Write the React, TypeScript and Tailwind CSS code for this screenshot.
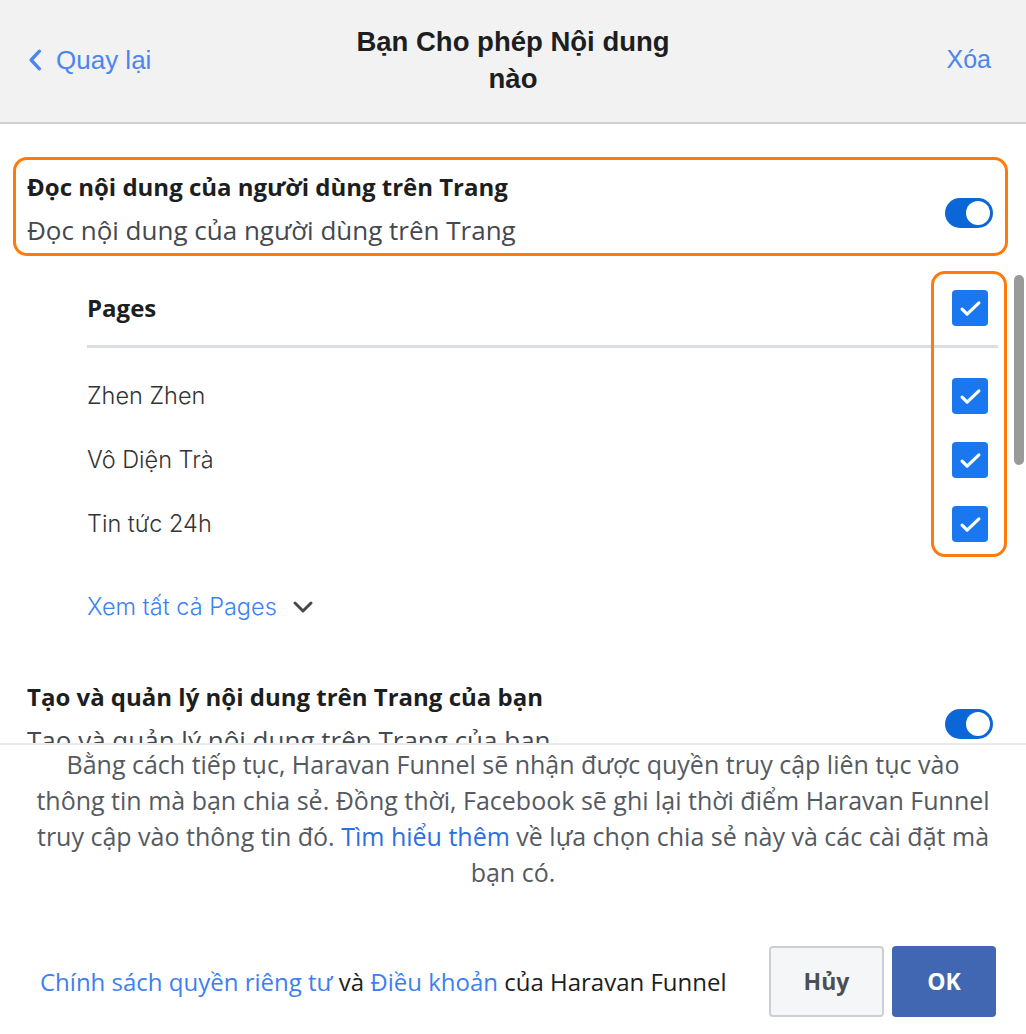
import React from "react";

const pages = ["Zhen Zhen", "Vô Diện Trà", "Tin tức 24h"];

const Toggle = () => (
    <div className="w-[48px] h-[30px] rounded-full bg-[#0b67d8] flex items-center justify-end pr-[3px]">
        <div className="w-[24px] h-[24px] rounded-full bg-white" />
    </div>
);

const Check = () => (
    <div className="w-[36px] h-[36px] rounded-[4px] bg-[#1b77f0] flex items-center justify-center">
        <svg viewBox="0 0 24 24" className="w-[27px] h-[27px]" fill="none" stroke="white" strokeWidth={2.8} strokeLinecap="round" strokeLinejoin="round">
            <path d="M4.5 12.5l4.5 4.5 10.5-10" />
        </svg>
    </div>
);

export default function App() {
    return (
        <div className="h-[1034px] w-full flex flex-col bg-white font-['Liberation_Sans',Arial,sans-serif] text-[#1c1e21]">
            {/* Header */}
            <div className="h-[124px] shrink-0 bg-[#f2f2f2] border-b-2 border-[#cfcfcf] flex items-center px-[28px]">
                <div className="w-[200px] flex items-center gap-[14px] text-[#4a86ee] text-[26px] -mt-[2px]">
                    <svg viewBox="0 0 12 20" className="w-[14px] h-[22px]" fill="none" stroke="currentColor" strokeWidth={3} strokeLinecap="round" strokeLinejoin="round">
                        <path d="M10 2L2.5 10 10 18" />
                    </svg>
                    <span>Quay lại</span>
                </div>
                <div className="flex-1 text-center font-bold text-[27.5px] leading-[37px] -mt-[2px]">
                    Bạn Cho phép Nội dung
                    <br />
                    nào
                </div>
                <div className="w-[200px] text-right text-[#4a86ee] text-[25px] pr-[7px] -mt-[2px]">Xóa</div>
            </div>

            {/* Scrollable content */}
            <div className="relative flex-1 overflow-hidden font-['Open_Sans',sans-serif]">
                {/* Section 1 */}
                <div className="ml-[13px] mr-[18px] mt-[33px] h-[99px] border-[3px] border-[#ff7a0c] rounded-[14px] flex items-center pl-[11px] pr-[12px]">
                    <div className="flex-1 mt-[4px]">
                        <div className="font-bold text-[24px] leading-[30px]">Đọc nội dung của người dùng trên Trang</div>
                        <div className="text-[26px] leading-[30px] mt-[13px] text-[#444950]">Đọc nội dung của người dùng trên Trang</div>
                    </div>
                    <div className="mt-[12px]">
                        <Toggle />
                    </div>
                </div>

                {/* Pages list */}
                <div className="relative pl-[87px] pr-[28px] mt-[15px]">
                    <div className="h-[74px] flex items-center justify-between pr-[10px]">
                        <span className="font-bold text-[24px]">Pages</span>
                        <Check />
                    </div>
                    <div className="h-[3px] bg-[#dadde1]" />
                    <div className="pt-[16px]">
                        {pages.map((p) => (
                            <div key={p} className="h-[64px] flex items-center justify-between pr-[10px]">
                                <span className="font-['Inter',sans-serif] font-light text-[23.5px] text-[#333]">{p}</span>
                                <Check />
                            </div>
                        ))}
                    </div>
                    {/* highlight around checkboxes */}
                    <div className="absolute top-0 right-[19px] w-[76px] h-[286px] border-[3px] border-[#ff7a0c] rounded-[14px]" />
                </div>

                <div className="pl-[87px] mt-[31px] h-[40px] flex items-center gap-[14px]">
                    <span className="font-['Inter',sans-serif] font-light text-[23.5px] text-[#3d82f2]">Xem tất cả Pages</span>
                    <svg viewBox="0 0 24 24" className="w-[24px] h-[24px]" fill="none" stroke="#444950" strokeWidth={3} strokeLinecap="round" strokeLinejoin="round">
                        <path d="M4 8l8 8 8-8" />
                    </svg>
                </div>

                {/* Section 2 */}
                <div className="mt-[55px] pl-[27px] pr-[33px] flex items-center">
                    <div className="flex-1">
                        <div className="font-bold text-[24px] leading-[30px]">Tạo và quản lý nội dung trên Trang của bạn</div>
                        <div className="text-[26px] leading-[30px] mt-[13px] text-[#444950]">Tạo và quản lý nội dung trên Trang của bạn</div>
                    </div>
                    <div className="mt-[10px]">
                        <Toggle />
                    </div>
                </div>

                {/* scrollbar */}
                <div className="absolute top-[151px] right-[2px] w-[10px] h-[190px] rounded-full bg-[#9a9a9a]" />
            </div>

            {/* Footer */}
            <div className="shrink-0 h-[291px] border-t-2 border-[#ebebeb] bg-white font-['Open_Sans',sans-serif]">
                <p className="mt-[1px] text-center text-[25px] leading-[36px] text-[#555a61] whitespace-nowrap">
                    Bằng cách tiếp tục, Haravan Funnel sẽ nhận được quyền truy cập liên tục vào
                    <br />
                    thông tin mà bạn chia sẻ. Đồng thời, Facebook sẽ ghi lại thời điểm Haravan Funnel
                    <br />
                    truy cập vào thông tin đó. <span className="text-[#2d6fe0]">Tìm hiểu thêm</span> về lựa chọn chia sẻ này và các cài đặt mà
                    <br />
                    bạn có.
                </p>
                <div className="mt-[56px] flex items-center pl-[40px] pr-[30px]">
                    <div className="flex-1 text-[24px] text-[#1c1e21]">
                        <span className="text-[#3d7ff0]">Chính sách quyền riêng tư</span> và{" "}
                        <span className="text-[#3d7ff0]">Điều khoản</span> của Haravan Funnel
                    </div>
                    <button className="w-[115px] h-[71px] rounded-[4px] border-2 border-[#ccd0d5] bg-[#f5f6f7] text-[#4b4f56] font-bold text-[23px]">
                        Hủy
                    </button>
                    <button className="ml-[8px] w-[104px] h-[71px] rounded-[4px] bg-[#4267b2] text-white font-bold text-[23px]">
                        OK
                    </button>
                </div>
            </div>
        </div>
    );
}
